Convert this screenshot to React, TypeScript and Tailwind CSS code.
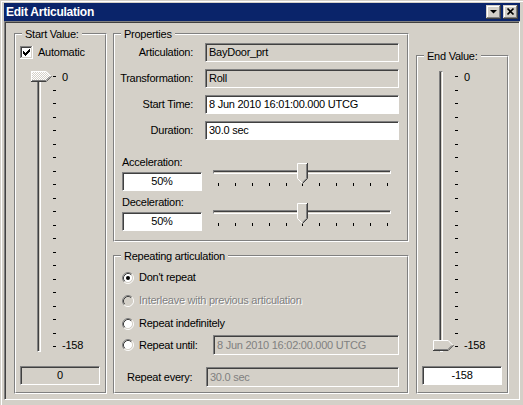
import type { ReactNode } from "react";

const ticks21 = Array.from({ length: 21 }, (_, i) => i);
const ticks11 = Array.from({ length: 11 }, (_, i) => i);

function Group({
  label,
  className,
  children,
}: {
  label: string;
  className?: string;
  children?: ReactNode;
}) {
  return (
    <div
      className={`relative border border-t-[#808080] border-l-[#808080] border-r-white border-b-white ${className ?? ""}`}
    >
      <div className="h-full border border-t-white border-l-white border-r-[#808080] border-b-[#808080]">
        {children}
      </div>
      <span className="absolute -top-[6px] left-[7px] bg-[#d4d0c8] px-[3px] leading-[13px]">
        {label}
      </span>
    </div>
  );
}

function Field({
  value,
  white,
  muted,
  center,
  className,
}: {
  value: string;
  white?: boolean;
  muted?: boolean;
  center?: boolean;
  className?: string;
}) {
  return (
    <div
      className={`flex items-center border border-t-[#808080] border-l-[#808080] border-r-white border-b-white shadow-[inset_1px_1px_0_#404040] ${
        white ? "bg-white" : "bg-[#d4d0c8]"
      } ${center ? "justify-center" : "pl-[3px]"} ${
        muted ? "text-[#808080]" : "text-black"
      } ${className ?? ""}`}
    >
      {value}
    </div>
  );
}

function Checkbox() {
  const check = [
    [3, 5],
    [4, 6],
    [5, 7],
    [6, 6],
    [7, 5],
    [8, 4],
    [9, 3],
  ];
  return (
    <svg width="13" height="13" viewBox="0 0 13 13" shapeRendering="crispEdges">
      <rect x="2" y="2" width="9" height="9" fill="#fff" />
      <path d="M0.5 12V0.5H12" stroke="#808080" fill="none" />
      <path d="M1.5 11V1.5H11" stroke="#404040" fill="none" />
      <path d="M0 12.5H12.5V0" stroke="#fff" fill="none" />
      <path d="M1 11.5H11.5V1" stroke="#d4d0c8" fill="none" />
      {check.map(([x, y]) => (
        <rect key={x} x={x} y={y} width="1" height="3" fill="#000" />
      ))}
    </svg>
  );
}

function Radio({ checked, disabled }: { checked?: boolean; disabled?: boolean }) {
  return (
    <svg width="12" height="12" viewBox="0 0 12 12" className="shrink-0">
      <circle cx="6" cy="6" r="4.5" fill={disabled ? "#d4d0c8" : "#fff"} />
      <path d="M2.11 9.89A5.5 5.5 0 0 1 9.89 2.11" stroke="#808080" fill="none" />
      <path d="M9.89 2.11A5.5 5.5 0 0 1 2.11 9.89" stroke="#fff" fill="none" />
      <path d="M2.82 9.18A4.5 4.5 0 0 1 9.18 2.82" stroke="#404040" fill="none" />
      <path d="M9.18 2.82A4.5 4.5 0 0 1 2.82 9.18" stroke="#d4d0c8" fill="none" />
      {checked && <circle cx="6" cy="6" r="2" fill="#000" />}
    </svg>
  );
}

function VThumb({ dithered, className }: { dithered?: boolean; className?: string }) {
  return (
    <svg width="21" height="11" viewBox="0 0 21 11" className={className}>
      <defs>
        <pattern id="dith" width="2" height="2" patternUnits="userSpaceOnUse">
          <rect width="2" height="2" fill="#d4d0c8" />
          <rect width="1" height="1" fill="#fff" />
          <rect x="1" y="1" width="1" height="1" fill="#fff" />
        </pattern>
      </defs>
      <polygon
        points="0,0 15,0 20.5,5.5 15,11 0,11"
        fill={dithered ? "url(#dith)" : "#d4d0c8"}
      />
      <path d="M0.5 10V0.5H15.2L19.8 5.2" stroke="#fff" fill="none" />
      <path d="M1 9.5H14.8L18.8 5.5" stroke="#808080" fill="none" />
      <path d="M0 10.5H15.2L20.5 5.2" stroke="#404040" fill="none" />
    </svg>
  );
}

function HThumb({ className }: { className?: string }) {
  return (
    <svg width="11" height="21" viewBox="0 0 11 21" className={className}>
      <polygon points="0,0 11,0 11,15.5 5.5,21 0,15.5" fill="#d4d0c8" />
      <path d="M0.5 15.5V0.5H10" stroke="#fff" fill="none" />
      <path d="M0.5 15.5L5.2 20.2" stroke="#fff" fill="none" />
      <path d="M9.5 1V15.3L5.5 19.3" stroke="#808080" fill="none" />
      <path d="M10.5 0V15.5L5.5 20.5" stroke="#404040" fill="none" />
    </svg>
  );
}

function VSlider({
  thumb,
  dithered,
  className,
}: {
  thumb: "top" | "bottom";
  dithered?: boolean;
  className?: string;
}) {
  return (
    <div className={`ml-[15px] flex h-[281px] ${className ?? ""}`}>
      <div className="relative w-[21px]">
        <div className="ml-[6px] h-full w-[4px] border-x border-l-[#808080] border-r-white border-t border-t-[#808080] border-b border-b-white shadow-[inset_1px_0_0_#404040]" />
        <VThumb
          dithered={dithered}
          className={thumb === "top" ? "absolute left-0 top-0" : "absolute bottom-[1px] left-0"}
        />
      </div>
      <div className="ml-px mt-[5px] flex h-[271px] w-[3px] flex-col justify-between">
        {ticks21.map((i) => (
          <div key={i} className="h-px w-[3px] bg-black" />
        ))}
      </div>
      <div className="ml-[6px] flex flex-col justify-between">
        <span>0</span>
        <span>-158</span>
      </div>
    </div>
  );
}

function HSlider() {
  return (
    <div className="relative ml-[11px] mt-[7px] h-[25px] w-[178px]">
      <div className="mt-[7px] h-[4px] border border-t-[#808080] border-l-[#808080] border-r-white border-b-white shadow-[inset_0_1px_0_#404040]" />
      <div className="ml-[5px] mt-[9px] flex w-[170px] justify-between">
        {ticks11.map((i) => (
          <div key={i} className="h-[3px] w-px bg-black" />
        ))}
      </div>
      <HThumb className="absolute left-[84px] top-0" />
    </div>
  );
}

function Percent({ label, className }: { label: string; className?: string }) {
  return (
    <div className={`flex items-start pl-[7px] ${className ?? ""}`}>
      <div className="flex w-[80px] flex-col">
        <span className="h-[13px]">{label}</span>
        <Field value="50%" white center className="mt-[3px] h-[19px] w-[80px]" />
      </div>
      <HSlider />
    </div>
  );
}

function PropRow({ label, value, white }: { label: string; value: string; white?: boolean }) {
  return (
    <div className="flex h-[19px] items-center">
      <span className="w-[78px] text-right">{label}</span>
      <Field value={value} white={white} className="ml-[12px] h-[19px] w-[194px]" />
    </div>
  );
}

function RadioRow({
  label,
  checked,
  disabled,
}: {
  label: string;
  checked?: boolean;
  disabled?: boolean;
}) {
  return (
    <div className="flex h-[23px] items-center gap-[5px]">
      <Radio checked={checked} disabled={disabled} />
      <span className={disabled ? "text-[#808080] [text-shadow:1px_1px_0_#fff]" : ""}>
        {label}
      </span>
    </div>
  );
}

function CaptionButton({ children }: { children: ReactNode }) {
  return (
    <div className="h-[14px] w-[15px] bg-[#d4d0c8] shadow-[inset_-1px_-1px_0_#404040,inset_1px_1px_0_#d4d0c8,inset_-2px_-2px_0_#808080,inset_2px_2px_0_#fff]">
      {children}
    </div>
  );
}

export default function App() {
  return (
    <div className="flex h-[405px] w-[523px] flex-col bg-[#d4d0c8] pb-[5px] pl-[4px] pr-[3px] pt-[3px] font-['Liberation_Sans',Arial,sans-serif] text-[11px] leading-[13px] tracking-[-0.25px] text-black shadow-[inset_1px_1px_0_#d4d0c8,inset_2px_2px_0_#fff]">
      <div className="flex h-[18px] items-center justify-between bg-[#0a246a] pl-[2px] pr-[2px]">
        <span className="text-[12px] font-bold text-white">Edit Articulation</span>
        <div className="flex gap-[2px]">
          <CaptionButton>
            <svg width="15" height="14" viewBox="0 0 15 14">
              <polygon points="4,5 11,5 7.5,8.5" fill="#000" />
            </svg>
          </CaptionButton>
          <CaptionButton>
            <svg width="15" height="14" viewBox="0 0 15 14">
              <path d="M4.5 3.5L10.5 9.5M10.5 3.5L4.5 9.5" stroke="#000" strokeWidth="1.7" />
            </svg>
          </CaptionButton>
        </div>
      </div>

      <div className="flex flex-1 border border-t-[#808080] border-l-[#808080] border-r-white border-b-white pb-[5px] pl-[9px] pr-[10px] pt-[11px] shadow-[inset_1px_1px_0_#404040]">
        <Group label="Start Value:" className="w-[93px]">
          <div className="ml-[4px] mt-[11px] flex h-[13px] items-center gap-[5px]">
            <Checkbox />
            <span>Automatic</span>
          </div>
          <VSlider thumb="top" dithered className="mt-[12px]" />
          <Field value="0" center className="ml-[4px] mt-[14px] h-[19px] w-[80px]" />
        </Group>

        <div className="ml-[6px] flex w-[296px] flex-col">
          <Group label="Properties" className="h-[209px]">
            <div className="mt-[8px] flex flex-col gap-[7px]">
              <PropRow label="Articulation:" value="BayDoor_prt" />
              <PropRow label="Transformation:" value="Roll" />
              <PropRow label="Start Time:" value="8 Jun 2010 16:01:00.000 UTCG" white />
              <PropRow label="Duration:" value="30.0 sec" white />
            </div>
            <Percent label="Acceleration:" className="mt-[16px]" />
            <Percent label="Deceleration:" className="mt-[5px]" />
          </Group>

          <Group label="Repeating articulation" className="mt-[13px] flex-1">
            <div className="mt-[9px] flex flex-col pl-[7px]">
              <RadioRow label="Don't repeat" checked />
              <RadioRow label="Interleave with previous articulation" disabled />
              <RadioRow label="Repeat indefinitely" />
              <div className="flex h-[20px] items-center">
                <Radio />
                <span className="ml-[5px] w-[74px]">Repeat until:</span>
                <Field
                  value="8 Jun 2010 16:02:00.000 UTCG"
                  muted
                  className="h-[20px] w-[186px]"
                />
              </div>
            </div>
            <div className="mt-[12px] flex items-center pl-[12px]">
              <span className="w-[79px]">Repeat every:</span>
              <Field value="30.0 sec" muted className="h-[20px] w-[193px]" />
            </div>
          </Group>
        </div>

        <Group label="End Value:" className="ml-[7px] mt-[22px] w-[93px]">
          <VSlider thumb="bottom" className="mt-[14px]" />
          <Field value="-158" white center className="ml-[4px] mt-[14px] h-[19px] w-[80px]" />
        </Group>
      </div>
    </div>
  );
}
